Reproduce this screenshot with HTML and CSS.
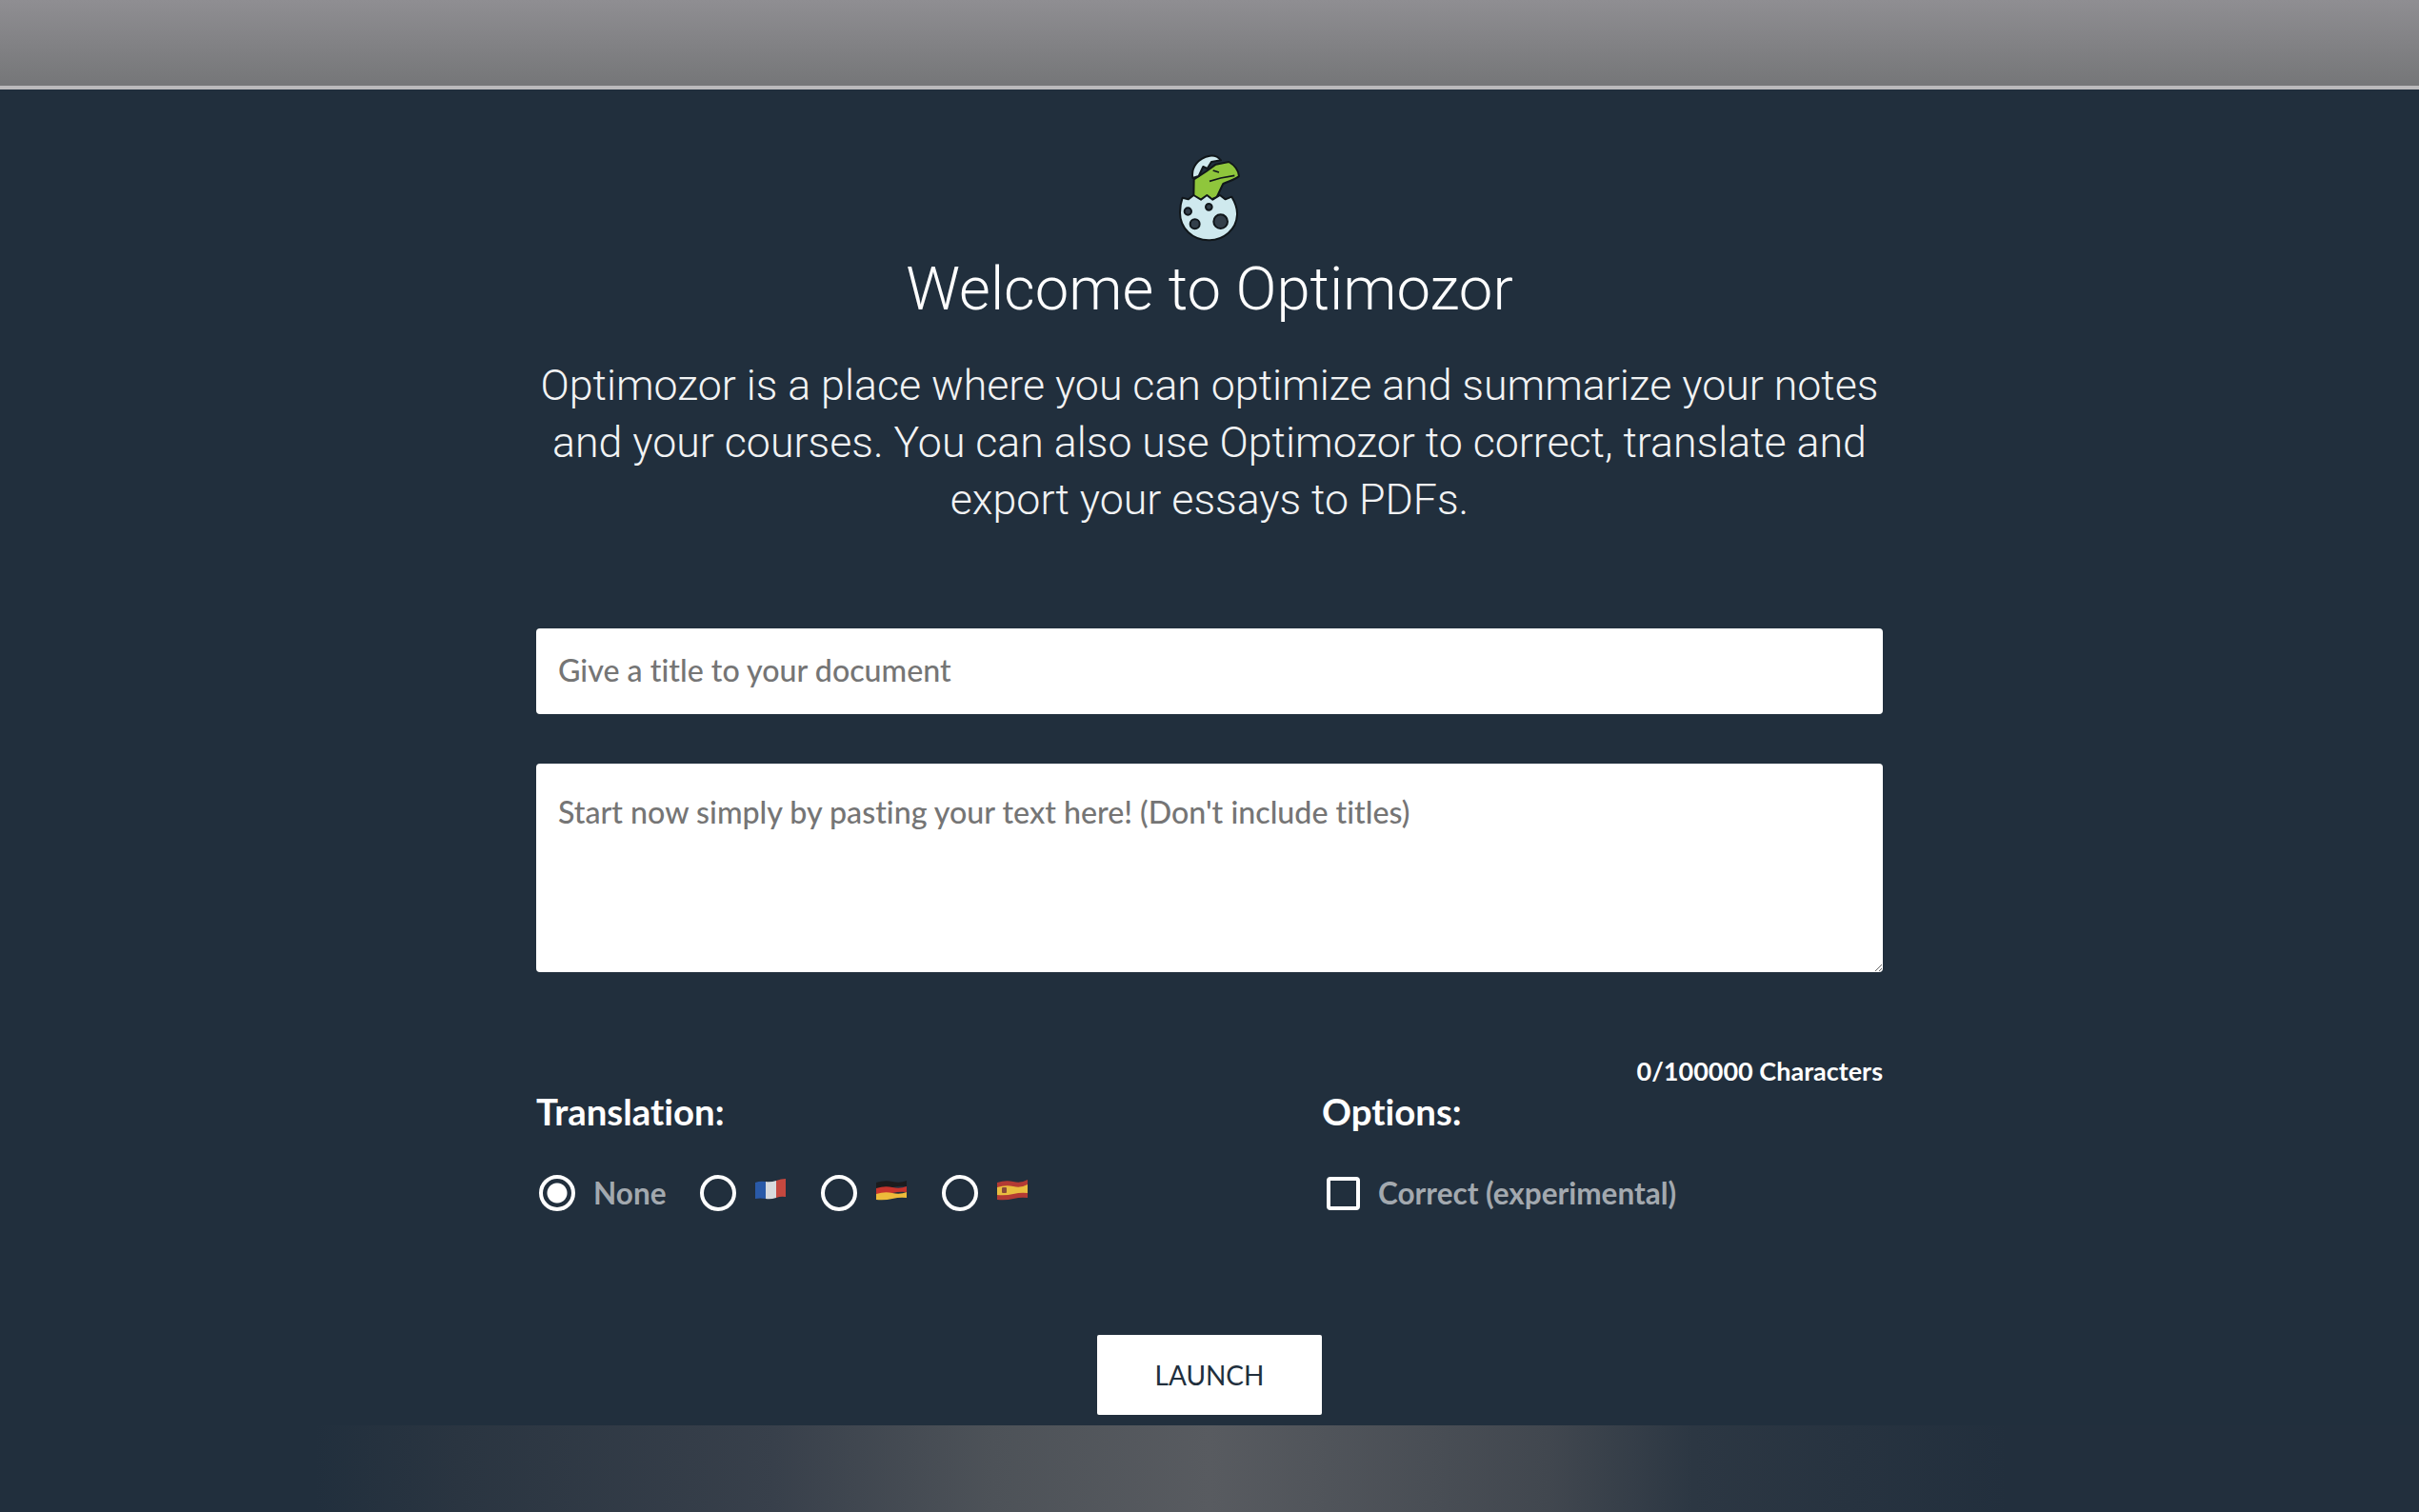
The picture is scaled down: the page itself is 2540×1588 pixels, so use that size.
FILE: index.html
```html
<!DOCTYPE html>
<html lang="en">
<head>
  <meta charset="UTF-8">
  <title>Optimozor</title>
  <meta name="viewport" content="width=device-width, initial-scale=1.0">
  <link rel="stylesheet" href="styles.css">
</head>
<body>

  <header class="barra"></header>

  <main class="contenido">
    <svg class="logo" viewBox="0 0 270 330" aria-label="Optimozor logo">
      <path class="dino" d="M86 100 L125 75 L155 53 L196 45 C213 55 226 72 228 90 C218 100 200 104 178 114 C172 125 166 140 158 156 L127 170 L85 160 Z"/>
      <path class="linea" d="M135 106 L170 96 L214 88 M146 72 L165 78"/>
      <path class="cascara" d="M82 96 C76 62 100 32 136 26 C150 24 163 30 171 40 L141 45 L128 66 L115 60 L101 90 Z"/>
      <path class="cascara" d="M50 158 L68 163 L85 150 L108 164 L127 150 L145 164 L168 150 L185 163 L205 155 C217 175 223 195 222 212 C220 258 180 292 132 292 C82 292 42 255 42 205 C42 188 45 172 50 158 Z"/>
      <circle class="mancha" cx="67" cy="201" r="11"/>
      <circle class="mancha" cx="133" cy="187" r="10"/>
      <circle class="mancha" cx="89" cy="241" r="15"/>
      <circle class="mancha" cx="170" cy="233" r="22"/>
    </svg>

    <h1>Welcome to Optimozor</h1>

    <p class="intro">Optimozor is a place where you can optimize and summarize your notes and your courses. You can also use Optimozor to correct, translate and export your essays to PDFs.</p>

    <form class="formulario">
      <input class="campo" type="text" placeholder="Give a title to your document">
      <textarea class="campo area" placeholder="Start now simply by pasting your text here! (Don't include titles)"></textarea>
      <div class="contador">0/100000 Characters</div>

      <div class="opciones">
        <fieldset class="grupo">
          <legend>Translation:</legend>
          <div class="fila">
            <label class="opcion"><input type="radio" name="idioma" checked><span>None</span></label>
            <label class="opcion"><input type="radio" name="idioma">
              <svg class="bandera" viewBox="0 0 34 24">
                <path fill="#2a5aa8" d="M1 5 Q6 3 12 4 V22 Q6 21 1 22 Z"/>
                <path fill="#d8dadd" d="M12 4 Q17 5 23 3 V21 Q17 23 12 22 Z"/>
                <path fill="#c5483f" d="M23 3 Q28 1 33 1 V20 Q28 19 23 21 Z"/>
              </svg>
            </label>
            <label class="opcion"><input type="radio" name="idioma">
              <svg class="bandera" viewBox="0 0 34 24">
                <path fill="#1b1b1d" d="M1 5 Q10 2 18 4 T33 3 V9 Q26 8 18 10 T1 11 Z"/>
                <path fill="#c8342c" d="M1 11 Q10 8 18 10 T33 9 V15 Q26 14 18 16 T1 17 Z"/>
                <path fill="#eebb3a" d="M1 17 Q10 14 18 16 T33 15 V21 Q26 20 18 22 T1 23 Z"/>
              </svg>
            </label>
            <label class="opcion"><input type="radio" name="idioma">
              <svg class="bandera" viewBox="0 0 34 24">
                <path fill="#b33a34" d="M1 5 Q10 2 18 4 T33 2 V21 Q26 20 18 22 T1 23 Z"/>
                <path fill="#e9bd3f" d="M1 10 Q10 7 18 9 T33 7 V16 Q26 15 18 17 T1 18 Z"/>
                <rect fill="#8a4a3a" x="6" y="10" width="5" height="6" rx="1"/>
              </svg>
            </label>
          </div>
        </fieldset>

        <fieldset class="grupo grupo-opciones">
          <legend>Options:</legend>
          <div class="fila">
            <label class="opcion"><input type="checkbox"><span>Correct (experimental)</span></label>
          </div>
        </fieldset>
      </div>

      <button type="button" class="lanzar">LAUNCH</button>
    </form>
  </main>

  <footer class="pie"></footer>

</body>
</html>
```

FILE: styles.css
```css
* {
  margin: 0;
  padding: 0;
  box-sizing: border-box;
}

html, body {
  height: 100%;
  overflow: hidden;
}

body {
  display: flex;
  flex-direction: column;
  background-color: #212f3d;
  color: white;
  font-family: 'Lato', sans-serif;
  font-variant-ligatures: none;
}

.barra {
  height: 94px;
  flex: none;
  background: linear-gradient(#8f8e92, #757678);
  border-bottom: 4px solid #bab9bb;
}

.pie {
  height: 91px;
  flex: none;
  background: linear-gradient(90deg, #212f3d 13%, #2a3541 19%, #38404b 32%, #4d5258 41%, #585b60 50%, #41474f 64%, #2c3743 70%, #222f3d 83%);
}

.contenido {
  flex: 1;
  display: flex;
  flex-direction: column;
  align-items: center;
  padding-top: 61px;
}

.logo {
  width: 90px;
  height: 110px;
  display: block;
}

.logo .dino {
  fill: #8fc63c;
  stroke: #10161a;
  stroke-width: 6;
  stroke-linejoin: round;
}

.logo .linea {
  fill: none;
  stroke: #10161a;
  stroke-width: 5;
}

.logo .cascara {
  fill: #cfe9ee;
  stroke: #10161a;
  stroke-width: 6;
  stroke-linejoin: round;
}

.logo .mancha {
  fill: #333f4a;
  stroke: #10161a;
  stroke-width: 6;
}

h1 {
  font-family: 'Roboto', sans-serif;
  font-weight: 300;
  font-size: 63.4px;
  line-height: 76px;
}

.intro {
  font-family: 'Roboto', sans-serif;
  font-weight: 300;
  font-size: 44.7px;
  line-height: 60px;
  width: 1414px;
  text-align: center;
  margin-top: 34px;
  color: #f2f3f4;
}

.formulario {
  width: 1414px;
  display: flex;
  flex-direction: column;
  margin-top: 105px;
}

.campo {
  display: block;
  width: 100%;
  height: 90px;
  border: none;
  border-radius: 4px;
  background-color: white;
  padding: 0 23px 3px;
  font-family: 'Lato', sans-serif;
  font-variant-ligatures: none;
  font-size: 32.2px;
  font-weight: 500;
  color: #333;
}

.campo::placeholder {
  color: #757575;
  opacity: 1;
}

.area {
  height: 219px;
  margin-top: 52px;
  padding-top: 31px;
}

.contador {
  text-align: right;
  font-size: 27px;
  font-weight: 700;
  line-height: 32px;
  margin-top: 88px;
}

.opciones {
  display: flex;
  margin-top: 4px;
}

.grupo {
  border: none;
  width: 825px;
}

.grupo-opciones {
  width: auto;
}

.grupo legend {
  font-size: 38.4px;
  font-weight: 700;
  line-height: 44px;
}

.fila {
  display: flex;
  align-items: center;
  gap: 33px;
  margin-top: 45px;
}

.opcion {
  display: flex;
  align-items: center;
  gap: 19px;
  font-size: 31.5px;
  font-weight: 700;
  color: #a3a9af;
}

.opcion input[type="radio"] {
  appearance: none;
  width: 38px;
  height: 38px;
  margin-left: 3px;
  border: 4px solid white;
  border-radius: 50%;
  background-color: transparent;
}

.opcion input[type="radio"]:checked {
  background: radial-gradient(circle, white 0 10px, transparent 11px);
}

.opcion input[type="checkbox"] {
  appearance: none;
  width: 35px;
  height: 35px;
  margin-left: 5px;
  border: 4px solid white;
  border-radius: 4px;
  background-color: transparent;
}

.bandera {
  width: 34px;
  height: 24px;
  display: block;
  margin-top: -8px;
}

.lanzar {
  align-self: center;
  width: 236px;
  height: 84px;
  margin-top: 130px;
  background-color: white;
  border: none;
  border-radius: 2px;
  font-family: 'Lato', sans-serif;
  font-size: 28px;
  color: #212f3d;
  cursor: pointer;
}
```
